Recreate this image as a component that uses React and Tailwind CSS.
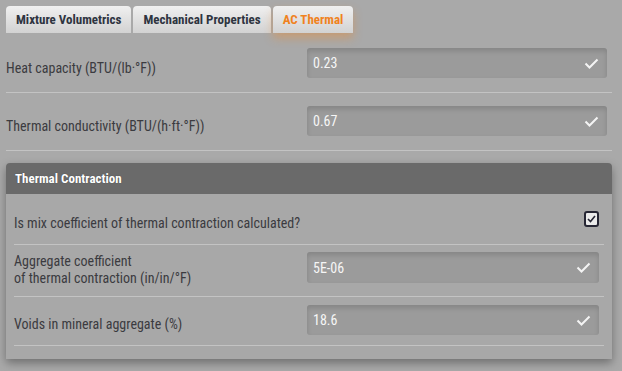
const TABS = [
  { name: 'Mixture Volumetrics' },
  { name: 'Mechanical Properties' },
  { name: 'AC Thermal', active: true },
]

function Check({ className }) {
  return (
    <svg width="15" height="11" viewBox="0 0 15 11" className={className}>
      <polyline points="1.5,5.5 5.5,9.5 13.5,1.5" fill="none" stroke="#f4f4f4" strokeWidth="2" />
    </svg>
  )
}

function ValueBox({ value, width, height = 'h-[30px]' }) {
  return (
    <div className={`${width} ${height} mr-[5px] shrink-0 flex items-center justify-between pl-[6px] pr-[8px] rounded-[3px] bg-[#9b9b9b] shadow-[inset_0_3px_5px_rgba(0,0,0,0.14)]`}>
      <span className="text-[14px] leading-[20px] text-[#f6f6f6]">{value}</span>
      <Check />
    </div>
  )
}

export default function App() {
  return (
    <div className="min-h-[371px] bg-[#a9a9a9] pt-[6px] pl-[6px] pr-[10px] font-['Roboto_Condensed',Roboto,sans-serif] text-[#3b3b40] overflow-hidden">
      {/* Tabs */}
      <div className="flex gap-[2px] h-[27px]">
        {TABS.map(t => (
          <div
            key={t.name}
            className={`px-[10px] flex items-center rounded-t-[4px] bg-gradient-to-b from-[#f0f0f0] to-[#d2d2d2] text-[13px] font-bold leading-none ${
              t.active ? 'text-[#f0821e] shadow-[0_5px_10px_rgba(235,140,50,0.45)]' : 'text-[#2e3440]'
            }`}
          >
            {t.name}
          </div>
        ))}
      </div>

      {/* General thermal */}
      <div className="flex items-start pt-[15px] h-[60px] border-b border-[#c3c3c3]">
        <div className="flex-1 mt-[10px] text-[14px] leading-[20px]">Heat capacity (BTU/(lb·°F))</div>
        <ValueBox value="0.23" width="w-[300px]" />
      </div>
      <div className="flex items-start pt-[13px] h-[58px] border-b border-[#c3c3c3]">
        <div className="flex-1 mt-[10px] text-[14px] leading-[20px]">Thermal conductivity (BTU/(h·ft·°F))</div>
        <ValueBox value="0.67" width="w-[300px]" />
      </div>

      {/* Thermal contraction panel */}
      <div className="mt-[12px] rounded-t-[4px] bg-[#a8a8a8] shadow-[0_4px_10px_rgba(0,0,0,0.35)] pb-[13px]">
        <div className="h-[31px] px-[9px] flex items-center rounded-t-[4px] bg-[#6a6a6a] text-white text-[13px] font-bold [text-shadow:0_0_1px_rgba(0,0,0,0.4)]">
          Thermal Contraction
        </div>
        <div className="px-[8px]">
          <div className="flex items-start h-[51px] border-b border-[#c3c3c3]">
            <div className="flex-1 mt-[19px] text-[14px] leading-[20px]">Is mix coefficient of thermal contraction calculated?</div>
            <div className="mt-[17px] mr-[5px] w-[15px] h-[16px] rounded-[3px] border-2 border-[#262634] bg-[#ececec] flex items-center justify-center">
              <svg width="9" height="8" viewBox="0 0 9 8">
                <polyline points="1,4 3.5,6.5 8,1" fill="none" stroke="#262634" strokeWidth="1.6" />
              </svg>
            </div>
          </div>
          <div className="flex items-start h-[52px] border-b border-[#c3c3c3]">
            <div className="flex-1 mt-[8px] text-[14px] leading-[17px]">
              Aggregate coefficient
              <br />
              of thermal contraction (in/in/°F)
            </div>
            <div className="mt-[7px]">
              <ValueBox value="5E-06" width="w-[292px]" height="h-[31px]" />
            </div>
          </div>
          <div className="flex items-start h-[49px] border-b border-[#c3c3c3]">
            <div className="flex-1 mt-[17px] text-[14px] leading-[20px]">Voids in mineral aggregate (%)</div>
            <div className="mt-[8px]">
              <ValueBox value="18.6" width="w-[292px]" />
            </div>
          </div>
        </div>
      </div>
    </div>
  )
}
